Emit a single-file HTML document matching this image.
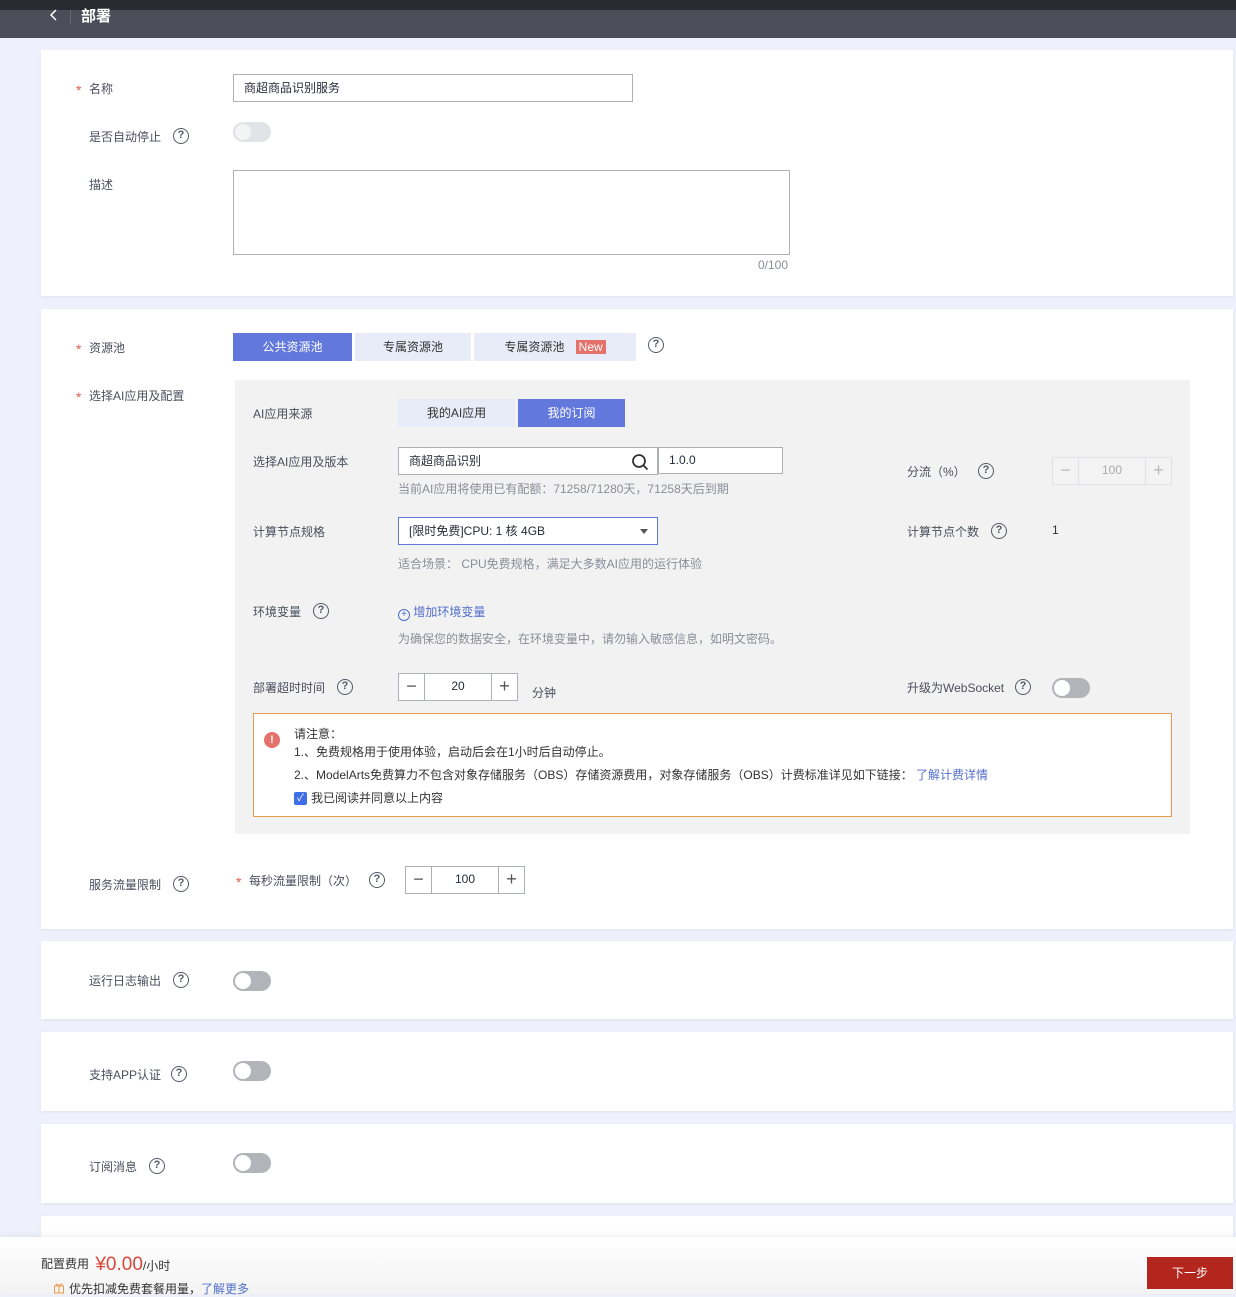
<!DOCTYPE html>
<html><head><meta charset="utf-8">
<style>
*{box-sizing:border-box;margin:0;padding:0}
body{width:1236px;height:1294px;overflow:hidden;background:#eef1fb;font-family:"Liberation Sans","Noto Sans CJK SC",sans-serif;font-size:12px;color:#333;position:relative}
.a{position:absolute;white-space:nowrap}
.card{position:absolute;left:41px;width:1192px;background:#fff;box-shadow:0 1px 3px rgba(0,0,0,.06)}
.lbl{color:#4a4f5c;font-size:12px}
.star{color:#e65b4f;display:inline-block;width:13px;font-size:14px;vertical-align:-2px}
.q{position:absolute;width:16px;height:16px;border:1.4px solid #555a66;border-radius:50%;font-size:11px;line-height:13px;text-align:center;color:#555a66;font-weight:bold}
.tog{position:absolute;width:38px;height:20px;border-radius:10px;background:#b2b4ba}
.tog::after{content:"";position:absolute;left:2px;top:2px;width:16px;height:16px;border-radius:50%;background:#fff}
.tog.l{background:#e2e3e6}
.tog.l::after{background:#f4f4f5}
.inp{position:absolute;border:1px solid #adb0b8;background:#fff;height:28px;line-height:26px;padding-left:10px;color:#252b3a}
.btn{position:absolute;height:28px;line-height:28px;text-align:center;font-size:12px}
.hint{color:#8a8e99}
.step{position:absolute;height:28px;border:1px solid #adb0b8;background:#fff;display:flex}
.step span{display:block;text-align:center;line-height:25px;font-size:18px;color:#555}
</style></head><body>
<div class="a" style="left:0;top:0;width:1236px;height:10px;background:#292b31"></div>
<div class="a" style="left:0;top:10px;width:1236px;height:28px;background:#4b4e59"></div>
<svg class="a" style="left:49px;top:8px" width="10" height="14" viewBox="0 0 10 14"><path d="M7 2L2 7L7 12" fill="none" stroke="#fff" stroke-width="1.5"/></svg>
<div class="a" style="left:70px;top:10px;width:1px;height:14px;background:#666a75"></div>
<div class="a" style="left:81px;top:5px;color:#fff;font-size:15px;font-weight:bold">部署</div>

<div class="card" style="top:50px;height:246px"></div>
<div class="a lbl" style="left:76px;top:80px"><span class="star">*</span>名称</div>
<div class="inp" style="left:233px;top:74px;width:400px">商超商品识别服务</div>
<div class="a lbl" style="left:89px;top:128px">是否自动停止</div>
<div class="q" style="left:173px;top:128px">?</div>
<div class="tog l" style="left:233px;top:122px"></div>
<div class="a lbl" style="left:89px;top:176px">描述</div>
<div class="inp" style="left:233px;top:170px;width:557px;height:85px"></div>
<div class="a hint" style="left:758px;top:258px">0/100</div>

<div class="card" style="top:309px;height:620px"></div>
<div class="a lbl" style="left:76px;top:339px"><span class="star">*</span>资源池</div>
<div class="btn" style="left:233px;top:333px;width:119px;background:#6278dc;color:#fff">公共资源池</div>
<div class="btn" style="left:355px;top:333px;width:116px;background:#e8ebf8;color:#333">专属资源池</div>
<div class="btn" style="left:474px;top:333px;width:162px;background:#e8ebf8;color:#333">专属资源池 <span style="background:#e5716b;color:#fff;padding:0 3px;margin-left:8px">New</span></div>
<div class="q" style="left:648px;top:337px">?</div>
<div class="a lbl" style="left:76px;top:387px"><span class="star">*</span>选择AI应用及配置</div>

<div class="a" style="left:235px;top:380px;width:955px;height:454px;background:#f2f2f2"></div>
<div class="a lbl" style="left:253px;top:405px">AI应用来源</div>
<div class="btn" style="left:398px;top:399px;width:117px;background:#e8ebf8;color:#333">我的AI应用</div>
<div class="btn" style="left:518px;top:399px;width:107px;background:#6278dc;color:#fff">我的订阅</div>

<div class="a lbl" style="left:253px;top:453px">选择AI应用及版本</div>
<div class="inp" style="left:398px;top:447px;width:260px">商超商品识别</div>
<svg class="a" style="left:631px;top:453px" width="18" height="18" viewBox="0 0 18 18"><circle cx="8" cy="8" r="6" fill="none" stroke="#333" stroke-width="1.8"/><path d="M12.5 12.5L16.5 16.5" stroke="#333" stroke-width="1.8"/></svg>
<div class="inp" style="left:658px;top:447px;width:125px;height:27px;line-height:25px">1.0.0</div>
<div class="a hint" style="left:398px;top:480px">当前AI应用将使用已有配额：71258/71280天，71258天后到期</div>
<div class="a lbl" style="left:907px;top:463px">分流（%）</div>
<div class="q" style="left:978px;top:463px">?</div>
<div class="step" style="left:1052px;top:457px;width:120px;background:#f3f3f4;border-color:#e0e1e4"><span style="width:26px;border-right:1px solid #e0e1e4;color:#bbb">−</span><span style="width:67px;border-right:1px solid #e0e1e4;font-size:12px;color:#aaa">100</span><span style="width:25px;color:#bbb">+</span></div>

<div class="a lbl" style="left:253px;top:523px">计算节点规格</div>
<div class="inp" style="left:398px;top:517px;width:260px;border-color:#6278dc">[限时免费]CPU: 1 核 4GB</div>
<div class="a" style="left:640px;top:529px;width:0;height:0;border-left:4px solid transparent;border-right:4px solid transparent;border-top:5px solid #555"></div>
<div class="a hint" style="left:398px;top:555px">适合场景： CPU免费规格，满足大多数AI应用的运行体验</div>
<div class="a lbl" style="left:907px;top:523px">计算节点个数</div>
<div class="q" style="left:991px;top:523px">?</div>
<div class="a" style="left:1052px;top:523px">1</div>

<div class="a lbl" style="left:253px;top:603px">环境变量</div>
<div class="q" style="left:313px;top:603px">?</div>
<div class="a" style="left:398px;top:603px;color:#526ecc"><span style="display:inline-block;width:12px;height:12px;border:1px solid #526ecc;border-radius:50%;font-size:10px;line-height:10px;text-align:center;vertical-align:-1px">+</span> 增加环境变量</div>
<div class="a hint" style="left:398px;top:630px">为确保您的数据安全，在环境变量中，请勿输入敏感信息，如明文密码。</div>

<div class="a lbl" style="left:253px;top:679px">部署超时时间</div>
<div class="q" style="left:337px;top:679px">?</div>
<div class="step" style="left:398px;top:673px;width:120px"><span style="width:26px;border-right:1px solid #adb0b8">−</span><span style="width:67px;border-right:1px solid #adb0b8;font-size:12px;color:#252b3a">20</span><span style="width:25px">+</span></div>
<div class="a lbl" style="left:532px;top:684px">分钟</div>
<div class="a lbl" style="left:907px;top:679px">升级为WebSocket</div>
<div class="q" style="left:1015px;top:679px">?</div>
<div class="tog" style="left:1052px;top:678px"></div>

<div class="a" style="left:253px;top:713px;width:919px;height:104px;border:1px solid #e89b4f;background:#fff"></div>
<div class="a" style="left:264px;top:732px;width:16px;height:16px;border-radius:50%;background:#e5716b;color:#fff;font-size:11px;font-weight:bold;text-align:center;line-height:16px">!</div>
<div class="a" style="left:294px;top:725px">请注意：</div>
<div class="a" style="left:294px;top:743px">1.、免费规格用于使用体验，启动后会在1小时后自动停止。</div>
<div class="a" style="left:294px;top:766px">2.、ModelArts免费算力不包含对象存储服务（OBS）存储资源费用，对象存储服务（OBS）计费标准详见如下链接： <span style="color:#526ecc">了解计费详情</span></div>
<div class="a" style="left:294px;top:792px;width:13px;height:13px;background:#3f6ee8;border-radius:2px;color:#fff;font-size:10px;line-height:13px;text-align:center">✓</div>
<div class="a" style="left:311px;top:789px">我已阅读并同意以上内容</div>

<div class="a lbl" style="left:89px;top:876px">服务流量限制</div>
<div class="q" style="left:173px;top:876px">?</div>
<div class="a lbl" style="left:236px;top:872px"><span class="star">*</span>每秒流量限制（次）</div>
<div class="q" style="left:369px;top:872px">?</div>
<div class="step" style="left:405px;top:866px;width:120px"><span style="width:26px;border-right:1px solid #adb0b8">−</span><span style="width:67px;border-right:1px solid #adb0b8;font-size:12px;color:#252b3a">100</span><span style="width:25px">+</span></div>

<div class="card" style="top:941px;height:78px"></div>
<div class="a lbl" style="left:89px;top:972px">运行日志输出</div>
<div class="q" style="left:173px;top:972px">?</div>
<div class="tog" style="left:233px;top:971px"></div>

<div class="card" style="top:1032px;height:79px"></div>
<div class="a lbl" style="left:89px;top:1066px">支持APP认证</div>
<div class="q" style="left:171px;top:1066px">?</div>
<div class="tog" style="left:233px;top:1061px"></div>

<div class="card" style="top:1124px;height:79px"></div>
<div class="a lbl" style="left:89px;top:1158px">订阅消息</div>
<div class="q" style="left:149px;top:1158px">?</div>
<div class="tog" style="left:233px;top:1153px"></div>

<div class="card" style="top:1216px;height:40px"></div>
<div class="a" style="left:0;top:1237px;width:1236px;height:57px;background:linear-gradient(#fff,#f3f3f3);box-shadow:0 -2px 6px rgba(0,0,0,.05)"></div>
<div class="a" style="left:41px;top:1254px"><span style="vertical-align:2px">配置费用</span> <span style="color:#d9473d;font-size:19px;margin-left:3px">¥0.00</span><span>/小时</span></div>
<svg class="a" style="left:53px;top:1282px" width="12" height="12" viewBox="0 0 12 12"><rect x="1.5" y="4" width="9" height="7" fill="none" stroke="#e89b4f"/><path d="M1 4H11M6 4V11M6 4C4 1 2 2 3.5 4M6 4C8 1 10 2 8.5 4" fill="none" stroke="#e89b4f"/></svg>
<div class="a" style="left:69px;top:1280px">优先扣减免费套餐用量，<span style="color:#526ecc">了解更多</span></div>
<div class="btn" style="left:1147px;top:1257px;width:86px;height:32px;line-height:32px;background:#b3261e;color:#fff">下一步</div>
</body></html>
